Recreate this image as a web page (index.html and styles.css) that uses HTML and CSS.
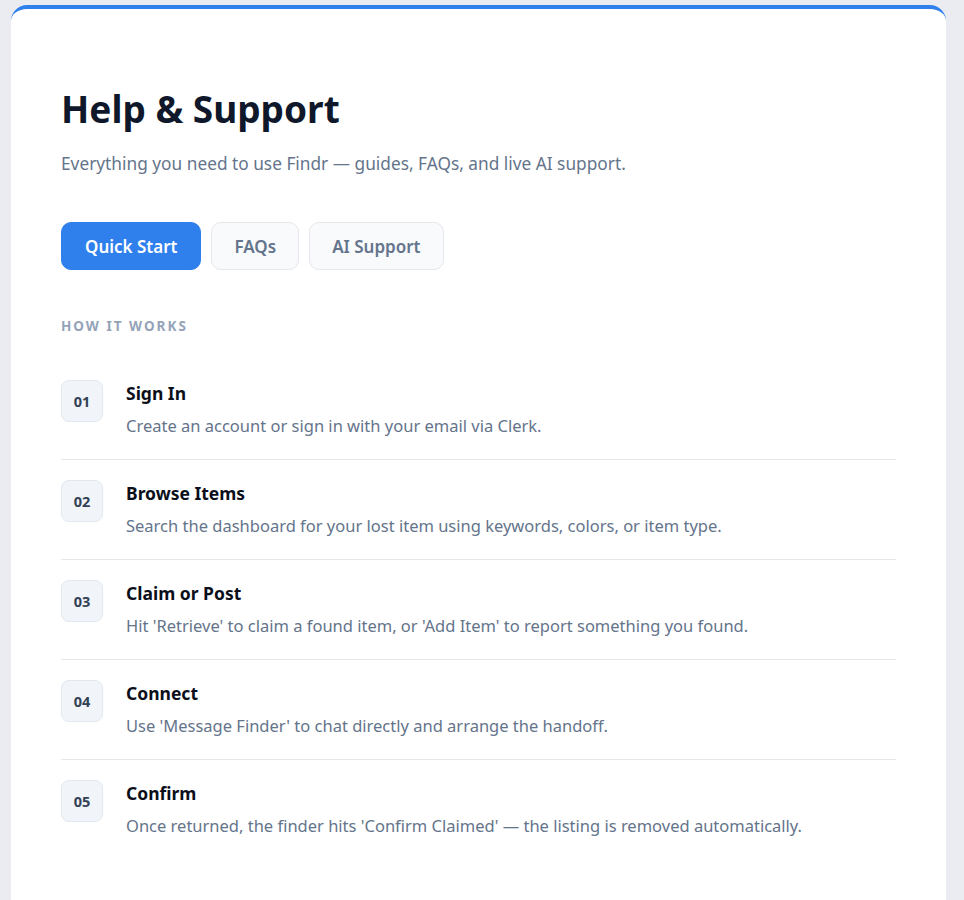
FILE: index.html
```html
<!DOCTYPE html>
<html lang="en">
<head>
    <meta charset="UTF-8">
    <meta name="viewport" content="width=device-width, initial-scale=1.0">
    <title>Help &amp; Support</title>
    <link rel="stylesheet" href="styles.css">
</head>
<body>
    <div class="help-card">
        <h1>Help &amp; Support</h1>
        <p class="subtitle">Everything you need to use Findr — guides, FAQs, and live AI support.</p>

        <div class="tabs">
            <button type="button" class="tab active">Quick Start</button>
            <button type="button" class="tab">FAQs</button>
            <button type="button" class="tab">AI Support</button>
        </div>

        <h2 class="section-label">How it works</h2>

        <ul class="steps">
            <li class="step">
                <span class="step-num">01</span>
                <div class="step-text">
                    <h3>Sign In</h3>
                    <p>Create an account or sign in with your email via Clerk.</p>
                </div>
            </li>
            <li class="step">
                <span class="step-num">02</span>
                <div class="step-text">
                    <h3>Browse Items</h3>
                    <p>Search the dashboard for your lost item using keywords, colors, or item type.</p>
                </div>
            </li>
            <li class="step">
                <span class="step-num">03</span>
                <div class="step-text">
                    <h3>Claim or Post</h3>
                    <p>Hit 'Retrieve' to claim a found item, or 'Add Item' to report something you found.</p>
                </div>
            </li>
            <li class="step">
                <span class="step-num">04</span>
                <div class="step-text">
                    <h3>Connect</h3>
                    <p>Use 'Message Finder' to chat directly and arrange the handoff.</p>
                </div>
            </li>
            <li class="step">
                <span class="step-num">05</span>
                <div class="step-text">
                    <h3>Confirm</h3>
                    <p>Once returned, the finder hits 'Confirm Claimed' — the listing is removed automatically.</p>
                </div>
            </li>
        </ul>
    </div>
</body>
</html>
```

FILE: styles.css
```css
* {
    margin: 0;
    padding: 0;
    box-sizing: border-box;
}

body {
    font-family: "Noto Sans", Arial, sans-serif;
    background: #ebecf1;
    padding: 5px 18px 0 11px;
}

.help-card {
    background: #fff;
    border-top: 4px solid #2f80ed;
    border-radius: 16px 16px 0 0;
    padding: 78px 50px 40px;
    min-height: calc(100vh - 5px);
}

h1 {
    font-size: 37px;
    font-weight: 700;
    color: #0f172a;
    line-height: 44px;
    margin-bottom: 20px;
}

.subtitle {
    font-size: 17.3px;
    color: #64748b;
    line-height: 26px;
    margin-bottom: 45px;
}

.tabs {
    display: flex;
    gap: 10px;
    margin-bottom: 47px;
}

.tab {
    font-family: inherit;
    font-size: 17px;
    font-weight: 600;
    color: #64748b;
    background: #f8fafc;
    border: 1px solid #e5e7eb;
    border-radius: 10px;
    height: 48px;
    padding: 0 22px;
    cursor: pointer;
}

.tab.active {
    background: #2f80ed;
    border-color: #2f80ed;
    color: #fff;
    padding: 0 23px;
}

.section-label {
    font-size: 13.5px;
    font-weight: 700;
    letter-spacing: 2px;
    text-transform: uppercase;
    color: #94a3b8;
    line-height: 18px;
    margin-bottom: 25px;
}

.steps {
    list-style: none;
}

.step {
    display: flex;
    gap: 23px;
    padding: 20px 0;
    border-bottom: 1px solid #e5e7eb;
}

.step:last-child {
    border-bottom: none;
}

.step-num {
    flex: none;
    width: 42px;
    height: 42px;
    display: flex;
    align-items: center;
    justify-content: center;
    background: #f1f5f9;
    border: 1px solid #e2e8f0;
    border-radius: 8px;
    font-size: 14.5px;
    font-weight: 700;
    color: #334155;
}

.step-text h3 {
    font-size: 17.5px;
    font-weight: 700;
    color: #0b0f1a;
    line-height: 24px;
    margin-top: 1px;
    margin-bottom: 8px;
}

.step-text p {
    font-size: 16.5px;
    color: #64748b;
    line-height: 26px;
}
```
